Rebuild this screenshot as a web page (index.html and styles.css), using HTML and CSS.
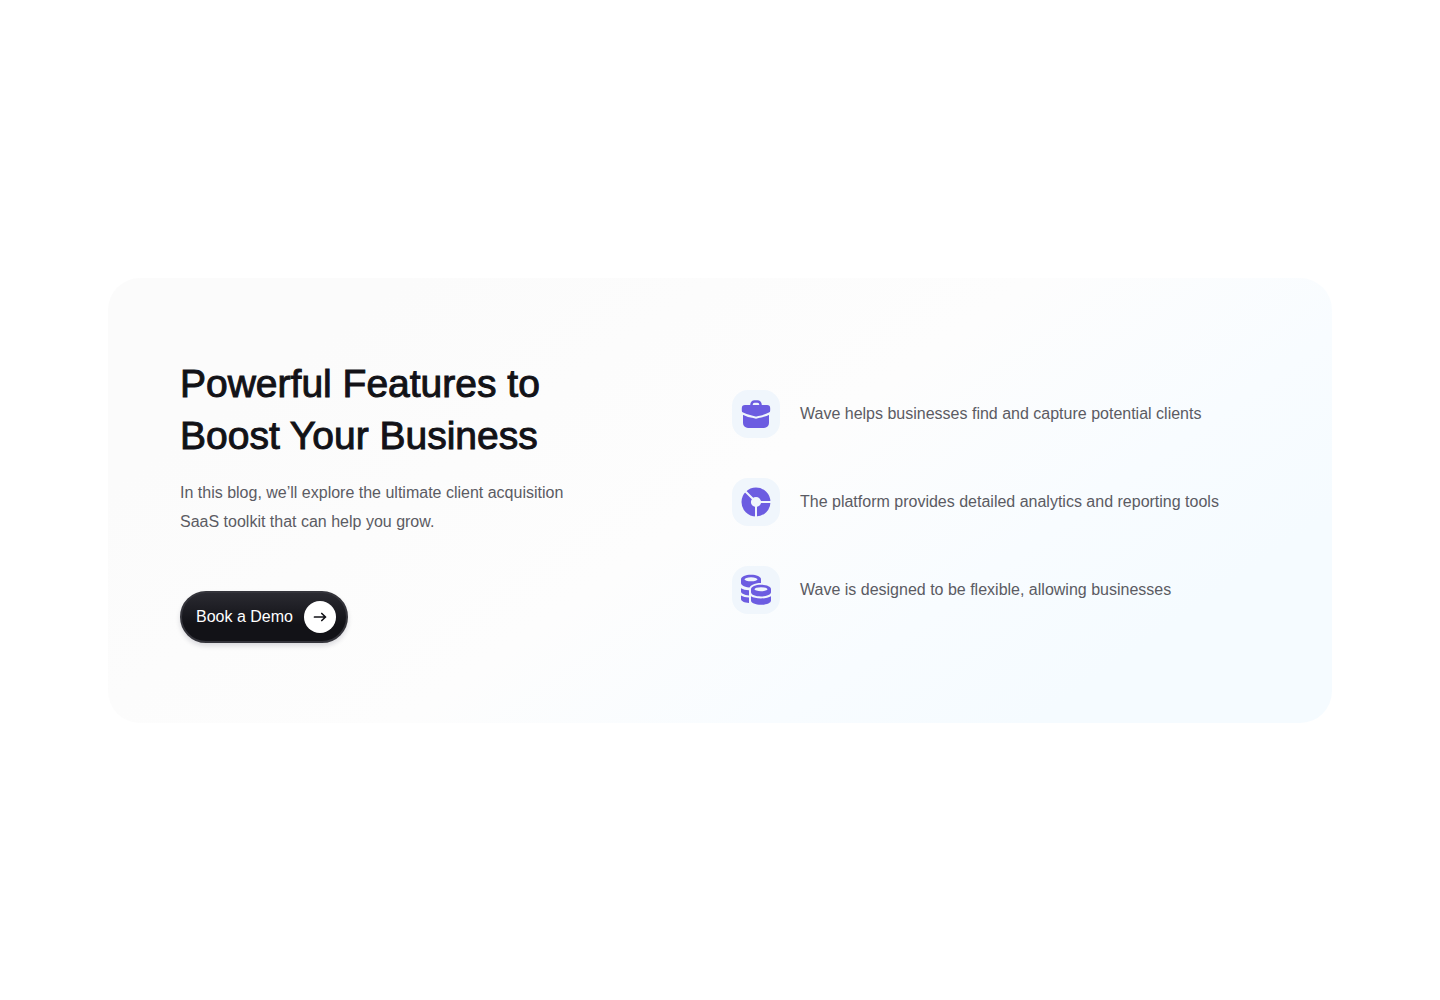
FILE: index.html
```html
<!DOCTYPE html>
<html lang="en">
<head>
    <meta charset="UTF-8">
    <meta name="viewport" content="width=device-width, initial-scale=1.0">
    <title>Wave</title>
    <link rel="stylesheet" href="styles.css">
</head>
<body>
    <main>
        <section class="cta">
            <div class="intro">
                <h2>Powerful Features to<br>Boost Your Business</h2>
                <p>In this blog, we’ll explore the ultimate client acquisition SaaS toolkit that can help you grow.</p>
                <button type="button" class="demo-btn">
                    Book a Demo
                    <span class="arrow">
                        <svg width="16" height="16" viewBox="0 0 16 16" fill="none" stroke="#121217" stroke-width="1.7" stroke-linecap="round" stroke-linejoin="round" aria-hidden="true">
                            <path d="M2.500 8h11M9.800 4.500L13.500 8l-3.700 3.500"/>
                        </svg>
                    </span>
                </button>
            </div>

            <ul class="features">
                <li>
                    <span class="tile">
                        <!-- briefcase -->
                        <svg width="32" height="32" viewBox="0 0 32 32" aria-hidden="true">
                            <path class="line" d="M11.500 8V6.500a3 3 0 0 1 3-3h3a3 3 0 0 1 3 3V8"/>
                            <path class="fill" d="M5 7h22a3.200 3.200 0 0 1 3.200 3.200v1.600c0 1.600-.5 3-1.200 4V25a5 5 0 0 1-5 5H8a5 5 0 0 1-5-5v-9.200c-.8-1-1.200-2.400-1.200-4v-1.600A3.200 3.200 0 0 1 5 7z"/>
                            <path class="cut" d="M1.500 15C6 17.400 10 18.500 13.500 19l2.500.8 2.500-.8c3.500-.5 7.500-1.600 12-4"/>
                        </svg>
                    </span>
                    Wave helps businesses find and capture potential clients
                </li>
                <li>
                    <span class="tile">
                        <!-- donut chart -->
                        <svg width="32" height="32" viewBox="0 0 32 32" aria-hidden="true">
                            <circle cx="16" cy="16" r="9.800" fill="none" stroke="#6c5ce1" stroke-width="9.400"/>
                            <path class="cut" d="M16 16h15.500M16 16v15.500M16 16L5 5"/>
                        </svg>
                    </span>
                    The platform provides detailed analytics and reporting tools
                </li>
                <li>
                    <span class="tile">
                        <!-- coin stacks -->
                        <svg width="32" height="32" viewBox="0 0 32 32" aria-hidden="true">
                            <path class="fill" d="M1 14.200c2 1.200 4.600 1.900 8 2.100v5.100c-4.600-.2-8-1.800-8-3.800z"/>
                            <path class="fill" d="M1 21.400c2 1.200 4.600 1.900 8 2.100v5.500c-4.600-.2-8-2-8-4z"/>
                            <path class="fill" d="M1 5.300C1 2.700 5.500.8 11 .8s10 1.900 10 4.500v3.800c0 2.600-4.500 4.500-10 4.500S1 11.700 1 9.100z"/>
                            <ellipse class="hole" cx="11" cy="5.300" rx="6.500" ry="2"/>
                            <path class="hole" d="M9.300 15c0-3.500 5-6 11.700-6v22.500H9.300z"/>
                            <path class="fill" d="M11 15.200c0-2.600 4.500-4.500 10-4.500s10 1.900 10 4.500v3c0 2.400-4.500 4.200-10 4.200s-10-1.800-10-4.200z"/>
                            <ellipse class="hole" cx="21" cy="15.200" rx="6.500" ry="2"/>
                            <path class="fill" d="M11 22.200c2.200 1.400 5.700 2.200 10 2.200s7.800-.8 10-2.200v4.300c0 2.500-4.500 4.300-10 4.300s-10-1.800-10-4.300z"/>
                        </svg>
                    </span>
                    Wave is designed to be flexible, allowing businesses
                </li>
            </ul>
        </section>
    </main>
</body>
</html>
```
FILE: styles.css
```css
* {
    box-sizing: border-box;
}
body {
    margin: 0;
    font-family: "Liberation Sans", Arial, sans-serif;
    font-size: 16px;
    color: #5b5b63;
    background-color: #fff;
}
main {
    display: flex;
    align-items: center;
    justify-content: center;
    min-height: 100vh;
    padding: 24px;
}
.cta {
    display: grid;
    grid-template-columns: 1fr 1fr;
    gap: 24px;
    align-items: center;
    width: 88%;
    max-width: 1224px;
    padding: 80px 72px;
    border-radius: 32px;
    background: linear-gradient(145deg, #fbfbfb 16%, #fdfdfd 50%, #f8fcff 70%, #f5fbff 84%);
}
.intro h2 {
    margin: 0 0 16px;
    font-size: 39px;
    font-weight: 400;
    line-height: 52px;
    color: #121217;
    -webkit-text-stroke: 1px #121217;
}
.intro p {
    max-width: 400px;
    margin: 0 0 55px;
    line-height: 29px;
}
.demo-btn {
    display: flex;
    align-items: center;
    justify-content: space-between;
    min-width: 168px;
    height: 52px;
    padding: 0 10px 0 14px;
    border: 2px solid #34343b;
    border-radius: 26px;
    background: linear-gradient(#2a2a31, #121217 65%);
    box-shadow: 0 3px 5px rgba(18, 18, 50, 0.15);
    font: inherit;
    color: #fff;
    cursor: pointer;
}
.arrow {
    display: flex;
    align-items: center;
    justify-content: center;
    width: 32px;
    height: 32px;
    border-radius: 50%;
    background-color: #fff;
}
.features {
    display: flex;
    flex-direction: column;
    gap: 40px;
    margin: 0;
    padding: 4px 0 0;
    list-style: none;
}
.features li {
    display: flex;
    align-items: center;
    gap: 20px;
}
.tile {
    display: flex;
    flex-shrink: 0;
    align-items: center;
    justify-content: center;
    width: 48px;
    height: 48px;
    border-radius: 16px;
    background-color: #f0f6fc;
}
.fill {
    fill: #6c5ce1;
}
.hole {
    fill: #f0f6fc;
}
.line {
    fill: none;
    stroke: #6c5ce1;
    stroke-width: 2.5;
}
.cut {
    fill: none;
    stroke: #f0f6fc;
    stroke-width: 2;
}

@media (max-width: 900px) {
    .cta {
        grid-template-columns: 1fr;
        gap: 48px;
        padding: 48px 32px;
    }
}
```
